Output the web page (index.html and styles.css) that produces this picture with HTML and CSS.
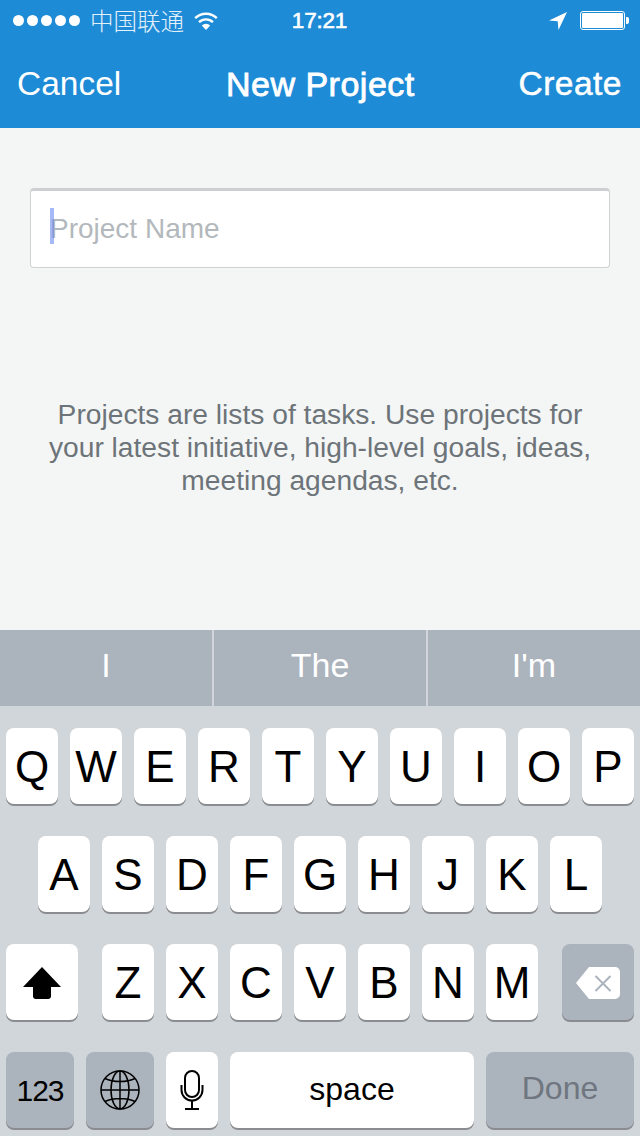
FILE: index.html
```html
<!DOCTYPE html>
<html lang="en">
<head>
    <meta charset="UTF-8">
    <meta name="viewport" content="width=device-width, initial-scale=1.0">
    <title>New Project</title>
    <link rel="stylesheet" href="styles.css">
</head>
<body>
    <div class="screen">
        <header class="top">
            <div class="status">
                <div class="status-left">
                    <div class="dots"><i></i><i></i><i></i><i></i><i></i></div>
                    <span class="carrier">中国联通</span>
                    <svg class="wifi" width="24" height="18" viewBox="0 0 24 18">
                        <path d="M1.200 6.200a15.500 15.500 0 0 1 21.600 0" fill="none" stroke="#fff" stroke-width="2.400"/>
                        <path d="M5 10.200a10 10 0 0 1 14 0" fill="none" stroke="#fff" stroke-width="2.400"/>
                        <path d="M12 18l-4.200-4.600a6 6 0 0 1 8.400 0z" fill="#fff"/>
                    </svg>
                </div>
                <div class="time">17:21</div>
                <div class="status-right">
                    <svg class="arrow" width="18" height="18" viewBox="0 0 18 18">
                        <path d="M18 0L0 8.500l8.700 .8 .8 8.700z" fill="#fff"/>
                    </svg>
                    <div class="battery"><div class="battery-fill"></div></div>
                    <div class="battery-tip"></div>
                </div>
            </div>
            <nav class="nav">
                <span class="nav-btn">Cancel</span>
                <span class="nav-title">New Project</span>
                <span class="nav-btn nav-create">Create</span>
            </nav>
        </header>

        <main class="content">
            <div class="field">
                <span class="caret"></span>
                <span class="placeholder">Project Name</span>
            </div>
            <p class="help">Projects are lists of tasks. Use projects for your latest initiative, high-level goals, ideas, meeting agendas, etc.</p>
        </main>

        <div class="suggest">
            <div class="suggest-item">I</div>
            <div class="suggest-item">The</div>
            <div class="suggest-item">I'm</div>
        </div>

        <div class="keyboard">
            <div class="row">
                <div class="key">Q</div><div class="key">W</div><div class="key">E</div><div class="key">R</div><div class="key">T</div>
                <div class="key">Y</div><div class="key">U</div><div class="key">I</div><div class="key">O</div><div class="key">P</div>
            </div>
            <div class="row">
                <div class="key">A</div><div class="key">S</div><div class="key">D</div><div class="key">F</div><div class="key">G</div>
                <div class="key">H</div><div class="key">J</div><div class="key">K</div><div class="key">L</div>
            </div>
            <div class="row row-third">
                <div class="key key-wide">
                    <svg width="38" height="32" viewBox="0 0 38 32">
                        <path d="M19 0L38 20H28V29a3 3 0 0 1-3 3H13a3 3 0 0 1-3-3V20H0z" fill="#000"/>
                    </svg>
                </div>
                <div class="letters">
                    <div class="key">Z</div><div class="key">X</div><div class="key">C</div><div class="key">V</div>
                    <div class="key">B</div><div class="key">N</div><div class="key">M</div>
                </div>
                <div class="key key-wide key-dark">
                    <svg width="44" height="32" viewBox="0 0 44 32">
                        <path d="M13 0H39a5 5 0 0 1 5 5V27a5 5 0 0 1-5 5H13L0 16z" fill="#fff"/>
                        <path d="M19.500 9L34.500 24M34.500 9L19.500 24" stroke="#abb3bd" stroke-width="2" fill="none"/>
                    </svg>
                </div>
            </div>
            <div class="row">
                <div class="key key-mode key-dark key-num">123</div>
                <div class="key key-mode key-dark key-icon">
                    <svg width="40" height="40" viewBox="0 0 40 40" fill="none" stroke="#000" stroke-width="1.500">
                        <circle cx="20" cy="20" r="19"/>
                        <ellipse cx="20" cy="20" rx="9" ry="19"/>
                        <path d="M20 1V39M1 20H39M5 8.500C13 12.500 27 12.500 35 8.500M5 31.500C13 27.500 27 27.500 35 31.500"/>
                    </svg>
                </div>
                <div class="key key-icon">
                    <svg width="24" height="40" viewBox="0 0 24 40" fill="none" stroke="#000" stroke-width="2">
                        <rect x="5" y="1" width="14" height="26" rx="7"/>
                        <path d="M1.500 15V20a10.500 10.500 0 0 0 21 0V15M12 31V39M5 39H19"/>
                    </svg>
                </div>
                <div class="key key-space">space</div>
                <div class="key key-done key-dark">Done</div>
            </div>
        </div>
    </div>
</body>
</html>
```

FILE: styles.css
```css
html, body {
    margin: 0;
    padding: 0;
}

body {
    font-family: "Liberation Sans", Arial, sans-serif;
    background-color: #f4f6f5;
}

.screen {
    width: 640px;
    height: 1136px;
    display: flex;
    flex-direction: column;
    overflow: hidden;
}

/* barra azul de cima */
.top {
    background-color: #1e8bd7;
    color: #fff;
    height: 128px;
}

.status {
    height: 40px;
    display: grid;
    grid-template-columns: 1fr auto 1fr;
    align-items: center;
    padding: 0 11px 0 13px;
    box-sizing: border-box;
}

.status-left {
    display: flex;
    align-items: center;
}

.dots {
    display: flex;
    gap: 3px;
}

.dots i {
    width: 11px;
    height: 11px;
    background-color: #fff;
    border-radius: 50%;
}

.carrier {
    font-family: "Noto Sans CJK SC", sans-serif;
    font-weight: 300;
    font-size: 23.500px;
    line-height: 40px;
    margin-left: 10px;
    color: #e4f1fa;
}

.wifi {
    margin-left: 10px;
    margin-top: 1px;
}

.time {
    font-size: 22.500px;
    letter-spacing: -0.2px;
    -webkit-text-stroke: 0.6px #fff;
    padding-top: 2px;
    margin-right: 3px;
}

.status-right {
    display: flex;
    align-items: center;
    justify-content: flex-end;
}

.arrow {
    margin-right: 13px;
    margin-top: 1px;
}

.battery {
    width: 41px;
    height: 15px;
    border: 1px solid #fff;
    border-radius: 3px;
    padding: 1px;
}

.battery-fill {
    height: 100%;
    background-color: #fff;
    border-radius: 1px;
}

.battery-tip {
    width: 3px;
    height: 7px;
    margin-left: 1px;
    background-color: #fff;
    border-radius: 0 2px 2px 0;
}

.nav {
    height: 88px;
    display: flex;
    justify-content: space-between;
    align-items: center;
    padding: 0 18px 0 17px;
    box-sizing: border-box;
    font-size: 33.500px;
}

.nav-title {
    font-size: 34px;
    letter-spacing: 0.5px;
    -webkit-text-stroke: 0.8px #fff;
    margin-left: 1px;
}

.nav-create {
    letter-spacing: 0.5px;
    -webkit-text-stroke: 0.5px #fff;
}

.content {
    flex: 1;
    padding: 60px 30px 0;
}

.field {
    position: relative;
    height: 80px;
    background-color: #fff;
    border: 1px solid #cfd2d4;
    border-top: 3px solid #cdd0d3;
    border-radius: 4px;
    box-sizing: border-box;
    display: flex;
    align-items: center;
    padding-left: 19px;
}

.caret {
    position: absolute;
    left: 19px;
    top: 17px;
    width: 4px;
    height: 36px;
    background-color: #5c7ff0;
    opacity: 0.55;
}

.placeholder {
    font-size: 28px;
    color: #b3b8bc;
}

.help {
    margin: 130px 0 0;
    padding: 0 10px;
    text-align: center;
    font-size: 28.200px;
    line-height: 33px;
    color: #6d7479;
}

/* sugestoes */
.suggest {
    height: 76px;
    display: flex;
    background-color: #abb3bd;
    color: #fff;
    font-size: 34px;
}

.suggest-item {
    flex: 1;
    display: flex;
    align-items: center;
    justify-content: center;
    padding-bottom: 5px;
    border-left: 2px solid #d1d5db;
}

.suggest-item:first-child {
    border-left: none;
}

/* teclado */
.keyboard {
    height: 430px;
    background-color: #d1d6da;
    padding: 22px 6px 0;
    box-sizing: border-box;
    display: flex;
    flex-direction: column;
    gap: 32px;
}

.row {
    display: flex;
    justify-content: center;
    gap: 12px;
}

.row-third {
    justify-content: space-between;
}

.letters {
    display: flex;
    gap: 12px;
}

.key {
    width: 52px;
    height: 76px;
    flex: none;
    box-sizing: border-box;
    padding-top: 1px;
    background-color: #fff;
    border-radius: 8px;
    box-shadow: 0 2px 0 #8a8c8f;
    color: #000;
    font-size: 44px;
    display: flex;
    align-items: center;
    justify-content: center;
}

.key-wide {
    width: 72px;
}

.key-dark {
    background-color: #abb3bd;
}

.key-mode {
    width: 68px;
}

.key-num {
    font-size: 30px;
    letter-spacing: -1px;
}

.key-icon {
    padding-top: 0;
    padding-bottom: 1px;
}

.key-space {
    width: 244px;
    font-size: 32px;
    padding: 0 0 2px;
}

.key-done {
    width: 148px;
    font-size: 32px;
    padding: 0 0 3px;
    color: #6f7680;
}
```
